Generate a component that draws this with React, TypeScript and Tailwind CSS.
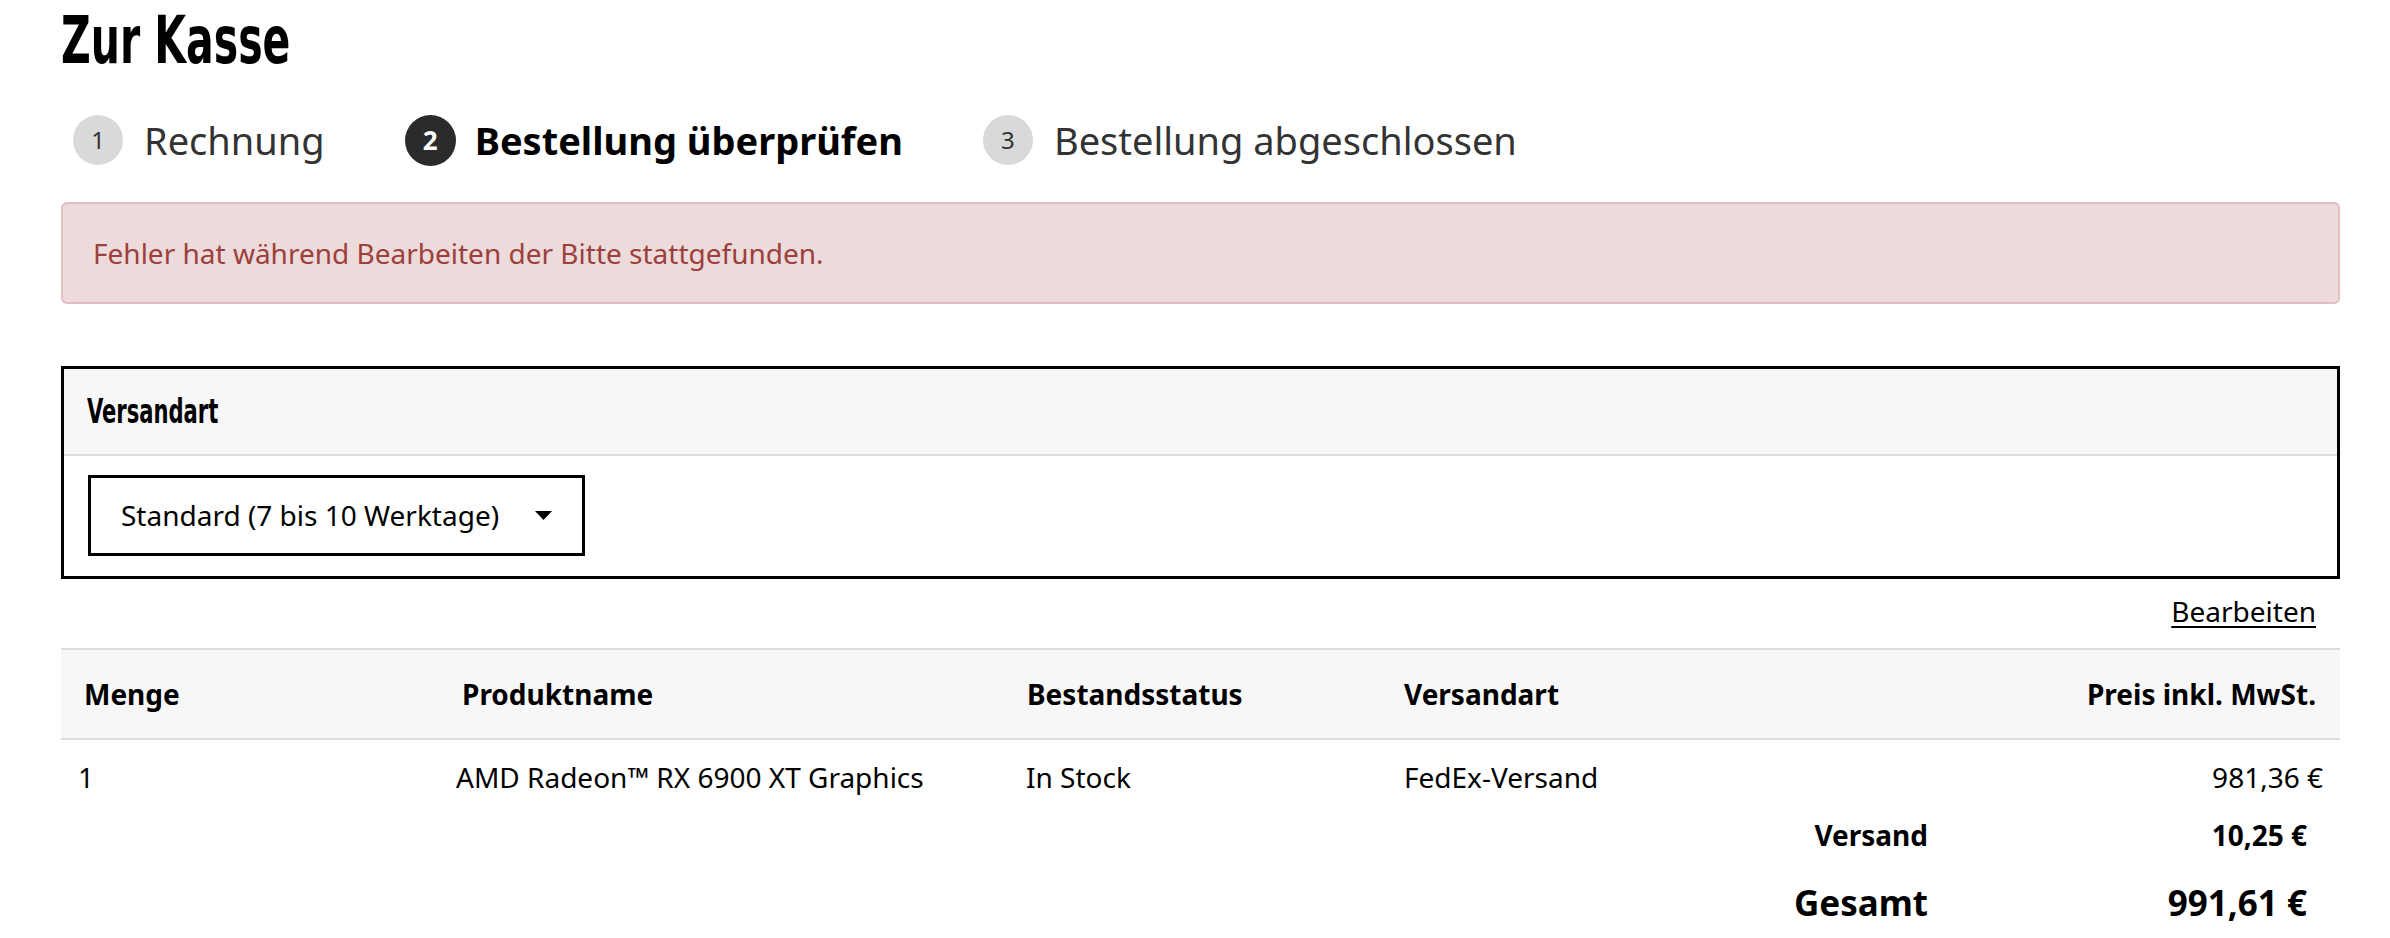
const STEPS = [
  { n: 1, label: "Rechnung", active: false },
  { n: 2, label: "Bestellung überprüfen", active: true },
  { n: 3, label: "Bestellung abgeschlossen", active: false },
];

const COLS = "grid grid-cols-[379px_564px_377px_1fr_auto]";
const NARROW = "font-['Liberation_Sans_Narrow','DejaVu_Sans_Condensed',sans-serif] [font-stretch:condensed]";

function Steps() {
  return (
    <ol className="flex items-center gap-x-[80px] pl-[12px] mt-[37px]">
      {STEPS.map((s) => (
        <li key={s.n} className="flex items-center">
          {s.active ? (
            <span className="flex items-center justify-center w-[51px] h-[51px] rounded-full bg-[#2b2b2b] text-white font-bold text-[26px] mr-[19px]">
              {s.n}
            </span>
          ) : (
            <span className="flex items-center justify-center w-[50px] h-[50px] rounded-full bg-[#d9d9d9] text-[#333] text-[24px] mr-[21px]">
              {s.n}
            </span>
          )}
          <span
            className={
              s.active
                ? "text-[38px] leading-none font-bold text-black"
                : "text-[38px] leading-none text-[#333]"
            }
          >
            {s.label}
          </span>
        </li>
      ))}
    </ol>
  );
}

export default function App() {
  return (
    <div className="min-h-screen bg-white pl-[61px] pr-[50px] font-['Noto_Sans','Open_Sans',sans-serif] text-black">
      <h1 className={`${NARROW} pt-[5px] text-[66px] leading-[1.1] font-bold`}>
        <span className="inline-block origin-left scale-x-[0.69]">Zur Kasse</span>
      </h1>

      <Steps />

      <div className="mt-[36px] h-[102px] flex items-center rounded-[6px] border-2 border-[#e0bfc2] bg-[#eddadb] pl-[30px] text-[28px] text-[#9b403b]">
        Fehler hat während Bearbeiten der Bitte stattgefunden.
      </div>

      <section className="mt-[62px] border-[3px] border-black">
        <div className="h-[87px] flex items-center bg-[#f7f7f7] border-b-2 border-[#dcdcdc] pl-[23px]">
          <h2 className={`${NARROW} text-[33px] leading-none font-bold`}>
            <span className="inline-block origin-left scale-x-[0.71]">Versandart</span>
          </h2>
        </div>
        <div className="pt-[19px] pb-[20px] pl-[24px]">
          <div className="w-[497px] h-[81px] border-[3px] border-black flex items-center justify-between pl-[30px] pr-[30px] text-[28px]">
            <span>Standard (7 bis 10 Werktage)</span>
            <svg width="17" height="9" viewBox="0 0 17 9">
              <path d="M0 0 L17 0 L8.5 9 Z" fill="#000" />
            </svg>
          </div>
        </div>
      </section>

      <div className="mt-[11px] flex justify-end pr-[24px] text-[28px] leading-[1.5]">
        <a href="#" className="underline underline-offset-[4px] decoration-[2px]">
          Bearbeiten
        </a>
      </div>

      <div
        className={`${COLS} mt-[16px] h-[92px] items-center bg-[#f7f7f7] border-y-2 border-[#dcdcdc] text-[28px] font-bold`}
      >
        <div className="pl-[23px]">Menge</div>
        <div className="pl-[22px]">Produktname</div>
        <div className="pl-[23px]">Bestandsstatus</div>
        <div className="pl-[23px]">Versandart</div>
        <div className="pr-[24px] text-right">Preis inkl. MwSt.</div>
      </div>

      <div className={`${COLS} h-[74px] items-center text-[28px]`}>
        <div className="pl-[17px]">1</div>
        <div className="pl-[16px]">AMD Radeon™ RX 6900 XT Graphics</div>
        <div className="pl-[22px]">In Stock</div>
        <div className="pl-[23px]">FedEx-Versand</div>
        <div className="pr-[17px] text-right">981,36 €</div>
      </div>

      <div className="flex justify-end items-center h-[42px] text-[28px] font-bold">
        <div className="text-right">Versand</div>
        <div className="w-[412px] pr-[33px] text-right">10,25 €</div>
      </div>
      <div className="flex justify-end items-center pt-[21px] text-[35px] leading-[1.5] font-bold">
        <div className="text-right">Gesamt</div>
        <div className="w-[412px] pr-[33px] text-right">991,61 €</div>
      </div>
    </div>
  );
}
